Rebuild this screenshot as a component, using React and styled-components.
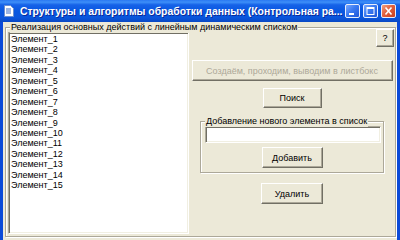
import React from "react";
import styled, { createGlobalStyle } from "styled-components";

const Global = createGlobalStyle`
  html, body {
    margin: 0;
    padding: 0;
  }
  body {
    width: 400px;
    height: 240px;
    overflow: hidden;
    background: #ece9d8;
    font-family: "Liberation Sans", Tahoma, sans-serif;
  }
`;

const Window = styled.div`
  width: 400px;
  height: 240px;
  display: flex;
  flex-direction: column;
  background: #0b4ad8;
`;

const TitleBar = styled.div`
  height: 22px;
  flex: none;
  display: flex;
  align-items: center;
  padding: 0 4px 0 4px;
  background: linear-gradient(
    to bottom,
    #2a78f2 0%,
    #3d8ff8 10%,
    #1662e8 22%,
    #0857e0 50%,
    #0a55dc 80%,
    #0948c4 100%
  );
`;

const TitleText = styled.div`
  flex: 1;
  margin-left: 6px;
  color: #fff;
  font-family: "Liberation Sans", sans-serif;
  font-weight: bold;
  font-size: 10.4px;
  white-space: nowrap;
  text-shadow: 1px 1px 0 #0a2a9a;
`;

const Controls = styled.div`
  display: flex;
  gap: 3px;
  margin-top: -1px;
`;

const ControlButton = styled.div`
  width: 15px;
  height: 14px;
  box-sizing: border-box;
  border: 1px solid #e8eefc;
  border-radius: 2px;
  display: flex;
  align-items: center;
  justify-content: center;
  background: ${(p) =>
    p.$close
      ? "linear-gradient(135deg, #f0a080 0%, #e2613f 45%, #c8401e 100%)"
      : "linear-gradient(135deg, #7aa8fc 0%, #3a7af2 45%, #1f56d8 100%)"};
`;

const Client = styled.div`
  flex: 1;
  margin: 0 3px;
  padding: 5px 1px 0 2px;
  background: #ece9d8;
`;

const GroupBox = styled.div`
  position: relative;
  box-sizing: border-box;
  height: ${(p) => p.$height}px;
  width: ${(p) => (p.$width ? `${p.$width}px` : "auto")};
  margin-top: ${(p) => p.$top || 0}px;
  border: 1px solid #aca899;
  box-shadow: inset 1px 1px 0 #fff, 1px 1px 0 #fff;
  padding: ${(p) => p.$pad || "0"};
`;

const Caption = styled.span`
  position: absolute;
  top: -6px;
  left: 4px;
  padding: 0 1px;
  background: #ece9d8;
  font-size: 9px;
  line-height: 11px;
  color: #000;
  white-space: nowrap;
`;

const Body = styled.div`
  display: flex;
  padding-top: 1px;
`;

const ListBox = styled.div`
  box-sizing: border-box;
  width: 181px;
  height: 202px;
  margin: 3px 0 0 2px;
  background: #fff;
  border: 1px solid;
  border-color: #aca899 #fff #fff #aca899;
  box-shadow: inset 1px 1px 0 #716f64, inset -1px -1px 0 #f1efe2;
  padding: 1px 0 0 2px;
`;

const Item = styled.div`
  font-size: 9px;
  line-height: 10.43px;
  color: #000;
  white-space: nowrap;
`;

const RightPanel = styled.div`
  flex: 1;
  display: flex;
  flex-direction: column;
  align-items: center;
`;

const Button = styled.div`
  box-sizing: border-box;
  width: ${(p) => p.$w}px;
  height: ${(p) => p.$h || 21}px;
  margin-top: ${(p) => p.$top || 0}px;
  align-self: ${(p) => (p.$end ? "flex-end" : "center")};
  margin-right: ${(p) => (p.$end ? 1 : 0)}px;
  display: flex;
  align-items: center;
  justify-content: center;
  background: #ece9d8;
  border: 1px solid;
  border-color: #fff #716f64 #716f64 #fff;
  box-shadow: inset -1px -1px 0 #aca899;
  font-size: 9px;
  color: ${(p) => (p.disabled ? "#aca899" : "#000")};
  white-space: nowrap;
`;

const Edit = styled.div`
  box-sizing: border-box;
  width: 176px;
  height: 17px;
  margin-left: 4px;
  background: #fff;
  border: 1px solid;
  border-color: #aca899 #fff #fff #aca899;
  box-shadow: inset 1px 1px 0 #716f64, inset -1px -1px 0 #f1efe2;
`;

const AddRow = styled.div`
  display: flex;
  justify-content: center;
`;

const items = Array.from({ length: 15 }, (_, i) => `Элемент_${i + 1}`);

export default function App() {
  return (
    <Window>
      <Global />
      <TitleBar>
        <svg width="10" height="12" viewBox="0 0 10 12">
          <path d="M0.5 0.5h6l3 3v8h-9z" fill="#fff" stroke="#6b8fd0" />
          <path d="M2 4h5M2 6h5M2 8h5" stroke="#3a6cc8" strokeWidth="1" />
        </svg>
        <TitleText>Структуры и алгоритмы обработки данных (Контрольная ра...</TitleText>
        <Controls>
          <ControlButton>
            <svg width="13" height="12" viewBox="0 0 13 12">
              <rect x="3" y="8" width="5" height="2" fill="#fff" />
            </svg>
          </ControlButton>
          <ControlButton>
            <svg width="13" height="12" viewBox="0 0 13 12">
              <rect x="3" y="2.5" width="7" height="7" fill="none" stroke="#fff" />
              <rect x="3" y="2" width="7" height="2" fill="#fff" />
            </svg>
          </ControlButton>
          <ControlButton $close>
            <svg width="13" height="12" viewBox="0 0 13 12">
              <path d="M3.5 2.5l6 7M9.5 2.5l-6 7" stroke="#fff" strokeWidth="1.6" />
            </svg>
          </ControlButton>
        </Controls>
      </TitleBar>
      <Client>
        <GroupBox $height={210}>
          <Caption>Реализация основных действий с линейным динамическим списком</Caption>
          <Body>
            <ListBox>
              {items.map((t) => (
                <Item key={t}>{t}</Item>
              ))}
            </ListBox>
            <RightPanel>
              <Button $w={18} $h={18} $end>
                ?
              </Button>
              <Button $w={201} $top={13} disabled>
                Создаём, проходим, выводим в листбокс
              </Button>
              <Button $w={59} $h={20} $top={7}>
                Поиск
              </Button>
              <GroupBox $width={184} $height={52} $top={13} $pad="4px 0 0 0">
                <Caption>Добавление нового элемента в список</Caption>
                <Edit />
                <AddRow>
                  <Button $w={61} $top={4}>
                    Добавить
                  </Button>
                </AddRow>
              </GroupBox>
              <Button $w={62} $top={10}>
                Удалить
              </Button>
            </RightPanel>
          </Body>
        </GroupBox>
      </Client>
    </Window>
  );
}
